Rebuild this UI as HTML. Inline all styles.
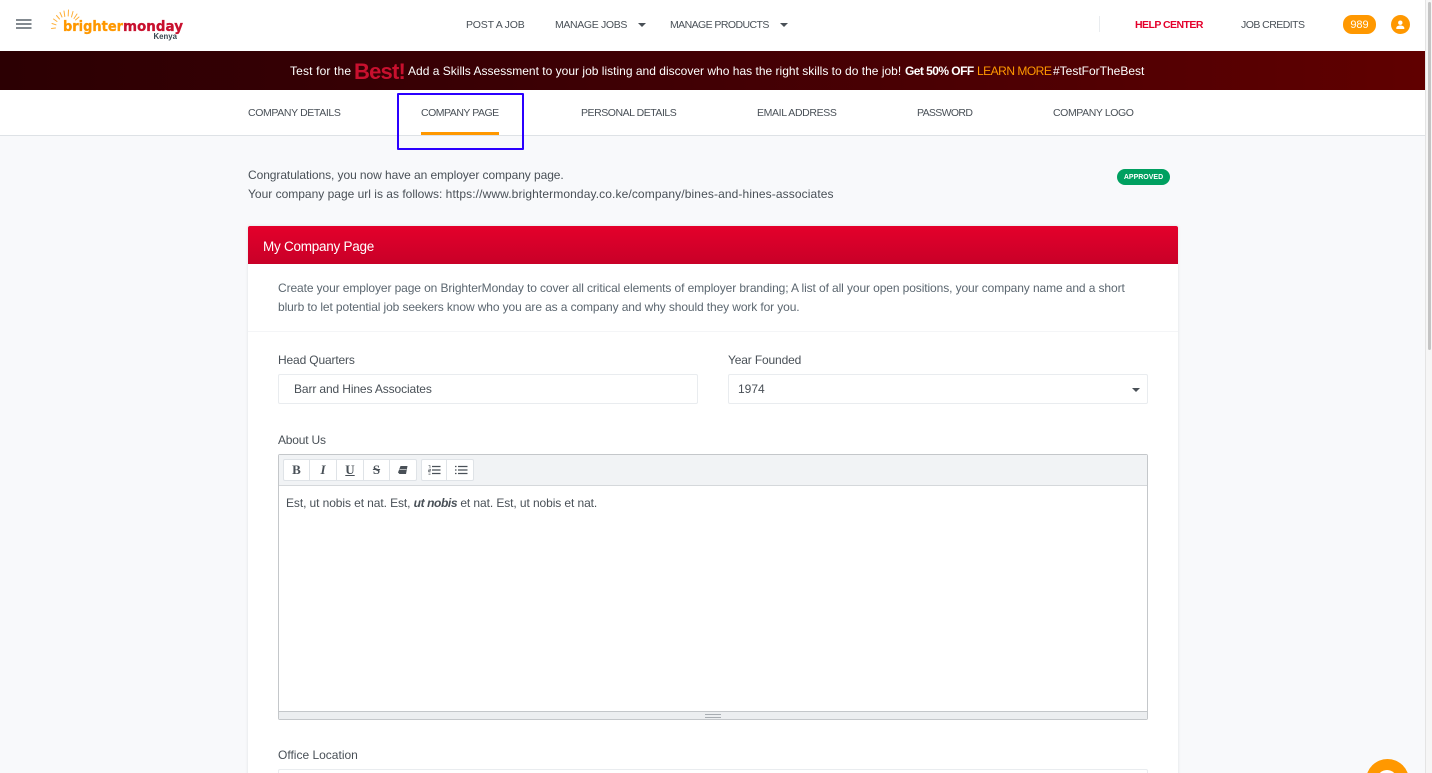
<!DOCTYPE html>
<html><head><meta charset="utf-8"><title>Company Page</title>
<style>
html,body{margin:0;padding:0;width:1432px;height:773px;overflow:hidden;background:#fff}
body{font-family:"Liberation Sans",Arial,sans-serif;color:#495057;position:relative}
.a{position:absolute;white-space:nowrap}
.t{position:absolute;white-space:nowrap;line-height:16px}
.nav{font-size:10.5px;color:#495057;top:17px}
.tab{font-size:10.5px;color:#495057;top:105px}
.body{font-size:12px;color:#495057}
.inp{position:absolute;background:#fff;border:1px solid #e9ecef;border-radius:2px;box-sizing:border-box}
.btn{position:absolute;top:459px;height:22px;background:#fff;border:1px solid #dfe3e7;box-sizing:border-box;text-align:center;font:bold 13px/20px "Liberation Serif",serif;color:#495057}
</style></head><body>
<div class="a" style="left:0;top:0;width:1425px;height:51px;background:#fff"></div>
<svg class="a" style="left:16px;top:18px" width="16" height="12"><path d="M0 2h15.500M0 6h15.500M0 10h15.500" stroke="#5a646c" stroke-width="1.500" fill="none"/></svg>
<svg class="a" style="left:48px;top:6px" width="140" height="36" viewBox="0 0 140 36">
<g stroke="#ffb03a" stroke-width="1" stroke-linecap="round"><path d="M3.500 22.500l4 -.5M4 17.500l4 1.300M5.500 13l3.500 2.500M8.500 9.500l3 3.500M12 6.500l2 4.500M16 5l.8 5.500M20.500 4l-.3 6M25 5.500l-1.500 5.500M29 8l-3 4.500M31 11l-3.500 3"/></g>
<text x="15" y="25" font-family="DejaVu Sans" font-weight="bold" font-size="14.500" fill="#ff9800" stroke="#ff9800" stroke-width=".3" textLength="60" lengthAdjust="spacingAndGlyphs">brighter</text>
<text x="75" y="25" font-family="DejaVu Sans" font-weight="bold" font-size="14.500" fill="#c8102e" stroke="#c8102e" stroke-width=".3" textLength="60" lengthAdjust="spacingAndGlyphs">monday</text>
<text x="105.500" y="33" font-family="Liberation Sans" font-weight="bold" font-size="7.800" fill="#37474f">Kenya</text>
</svg>
<div class="t nav" style="left:466px;letter-spacing:-.2px">POST A JOB</div>
<div class="t nav" style="left:555px;letter-spacing:-.35px">MANAGE JOBS</div>
<div class="a" style="left:638px;top:23px;border:4px solid transparent;border-top:4px solid #495057;border-bottom:0"></div>
<div class="t nav" style="left:670px;letter-spacing:-.57px">MANAGE PRODUCTS</div>
<div class="a" style="left:780px;top:23px;border:4px solid transparent;border-top:4px solid #495057;border-bottom:0"></div>
<div class="a" style="left:1099px;top:16px;width:1px;height:16px;background:#e9ecef"></div>
<div class="t nav" style="left:1135px;color:#e4002b;font-weight:bold;letter-spacing:-.55px">HELP CENTER</div>
<div class="t nav" style="left:1241px;letter-spacing:-.54px">JOB CREDITS</div>
<div class="a" style="left:1343px;top:15px;width:33px;height:19px;border-radius:9px;background:#ff9800;color:#fff;font-size:11px;line-height:20px;text-align:center">989</div>
<div class="a" style="left:1391px;top:15px;width:19px;height:19px;border-radius:50%;background:#ff9800"></div>
<svg class="a" style="left:1391px;top:15px" width="19" height="19"><circle cx="9.300" cy="7.700" r="2.200" fill="#fff"/><path d="M5.300 14v-1c0-2 2.500-2.500 4-2.500s4 .5 4 2.500v1z" fill="#fff"/></svg>

<div class="a" style="left:0;top:51px;width:1425px;height:39px;background:linear-gradient(90deg,#2c0003 0%,#3a0004 35%,#4d0003 70%,#600000 100%)"></div>
<div class="t" style="left:290px;top:63px;font-size:12px;color:#fff;letter-spacing:.15px">Test for the</div>
<div class="t" style="left:354px;top:61px;font-size:22px;line-height:22px;font-weight:bold;color:#c8102e;letter-spacing:-.8px">Best!</div>
<div class="t" style="left:408px;top:63px;font-size:12px;color:#fff;letter-spacing:.01px">Add a Skills Assessment to your job listing and discover who has the right skills to do the job!</div>
<div class="t" style="left:905px;top:63px;font-size:12px;color:#fff;font-weight:bold;letter-spacing:-.55px">Get 50% OFF</div>
<div class="t" style="left:977px;top:63px;font-size:12px;color:#ff9800;letter-spacing:-.5px">LEARN MORE</div>
<div class="t" style="left:1053px;top:63px;font-size:12px;color:#fff">#TestForTheBest</div>

<div class="a" style="left:0;top:90px;width:1425px;height:45px;background:#fff"></div>
<div class="a" style="left:0;top:135px;width:1425px;height:638px;background:#f8f9fb;border-top:1px solid #dee2e6"></div>
<div class="t tab" style="left:248px;letter-spacing:-.37px">COMPANY DETAILS</div>
<div class="t tab" style="left:421px;letter-spacing:-.48px">COMPANY PAGE</div>
<div class="a" style="left:421px;top:132px;width:78px;height:3px;background:#ff9800"></div>
<div class="a" style="left:397px;top:93px;width:127px;height:57px;box-sizing:border-box;border:2px solid #2b00ff;border-radius:1px"></div>
<div class="t tab" style="left:581px;letter-spacing:-.46px">PERSONAL DETAILS</div>
<div class="t tab" style="left:757px;letter-spacing:-.36px">EMAIL ADDRESS</div>
<div class="t tab" style="left:917px;letter-spacing:-.65px">PASSWORD</div>
<div class="t tab" style="left:1053px;letter-spacing:-.4px">COMPANY LOGO</div>

<div class="t body" style="left:248px;top:167px;letter-spacing:-.07px">Congratulations, you now have an employer company page.</div>
<div class="t body" style="left:248px;top:186px">Your company page url is as follows: <span style="letter-spacing:.11px">https://www.brightermonday.co.ke/company/bines-and-hines-associates</span></div>
<div class="a" style="left:1117px;top:169px;width:53px;height:16px;border-radius:8px;background:#00a060;color:#fff;font-size:7px;font-weight:bold;line-height:17px;text-align:center">APPROVED</div>

<div class="a" style="left:248px;top:226px;width:930px;height:560px;background:#fff;box-shadow:0 0 3px rgba(0,0,0,.1)"></div>
<div class="a" style="left:248px;top:226px;width:930px;height:38px;background:linear-gradient(180deg,#e4002b,#c80028);border-radius:2px 2px 0 0"></div>
<div class="t" style="left:263px;top:239px;font-size:13.500px;color:#fff;letter-spacing:-.25px">My Company Page</div>
<div class="t body" style="left:278px;top:280px;color:#5c6770;letter-spacing:-.102px">Create your employer page on BrighterMonday to cover all critical elements of employer branding; A list of all your open positions, your company name and a short</div>
<div class="t body" style="left:278px;top:299px;color:#5c6770;letter-spacing:-.11px">blurb to let potential job seekers know who you are as a company and why should they work for you.</div>
<div class="a" style="left:248px;top:331px;width:930px;height:1px;background:#f4f5f7"></div>

<div class="t body" style="left:278px;top:352px;letter-spacing:-.15px">Head Quarters</div>
<div class="t body" style="left:728px;top:352px;letter-spacing:-.15px">Year Founded</div>
<div class="inp" style="left:278px;top:374px;width:420px;height:30px"></div>
<div class="t body" style="left:294px;top:381px;letter-spacing:-.12px">Barr and Hines Associates</div>
<div class="inp" style="left:728px;top:374px;width:420px;height:30px"></div>
<div class="t body" style="left:738px;top:381px">1974</div>
<div class="a" style="left:1132px;top:388px;border:4px solid transparent;border-top:4px solid #495057;border-bottom:0"></div>

<div class="t body" style="left:278px;top:432px;letter-spacing:-.2px">About Us</div>
<div class="a" style="left:278px;top:454px;width:870px;height:266px;box-sizing:border-box;border:1px solid #c4c7ca;border-radius:2px;background:#fff"></div>
<div class="a" style="left:279px;top:455px;width:868px;height:31px;background:#f1f3f5;border-bottom:1px solid #d5d8db;box-sizing:border-box"></div>
<div class="btn" style="left:283px;width:27px;border-radius:2px 0 0 2px">B</div>
<div class="btn" style="left:310px;width:27px;font-style:italic;border-left:0">I</div>
<div class="btn" style="left:337px;width:27px;text-decoration:underline;border-left:0">U</div>
<div class="btn" style="left:364px;width:26px;text-decoration:line-through;border-left:0">S</div>
<div class="btn" style="left:390px;width:27px;border-left:0;border-radius:0 2px 2px 0"></div>
<svg class="a" style="left:397px;top:465px" width="12" height="10"><path d="M3.500 1h7l-1.500 8h-6.500l-1.500-1.500z" fill="#495057"/><path d="M2.500 4.500h7" stroke="#fff" stroke-width=".6"/></svg>
<div class="btn" style="left:421px;width:26px;border-radius:2px 0 0 2px"></div>
<div class="btn" style="left:447px;width:27px;border-left:0;border-radius:0 2px 2px 0"></div>
<svg class="a" style="left:428px;top:465px" width="13" height="10"><path d="M4 1.500h8.500M4 5h8.500M4 8.500h8.500" stroke="#495057" stroke-width="1.300"/><path d="M.5 .5h1.500v2.500M.5 4.200h2v1.200h-2v1.200h2M.5 8h2M.5 9.500h2" stroke="#495057" stroke-width=".6" fill="none"/></svg>
<svg class="a" style="left:455px;top:465px" width="13" height="10"><path d="M3 1.500h9.500M3 5h9.500M3 8.500h9.500M0 1.500h1.500M0 5h1.500M0 8.500h1.500" stroke="#495057" stroke-width="1.300"/></svg>
<div class="t body" style="left:286px;top:495px;letter-spacing:-.09px">Est, ut nobis et nat. Est, <b style="letter-spacing:-.4px"><i>ut nobis</i></b> et nat. Est, ut nobis et nat.</div>
<div class="a" style="left:279px;top:711px;width:868px;height:7px;background:#eceef0;border-top:1px solid #c4c7ca"></div>
<div class="a" style="left:705px;top:714px;width:16px;height:2px;border-top:1px solid #a8adb2;border-bottom:1px solid #a8adb2"></div>

<div class="t body" style="left:278px;top:747px">Office Location</div>
<div class="inp" style="left:278px;top:769px;width:870px;height:30px"></div>

<div class="a" style="left:1366px;top:759px;width:43px;height:43px;border-radius:50%;background:#ff9800"></div>
<div class="a" style="left:1377px;top:770px;width:20px;height:20px;border-radius:50%;background:#fff"></div>

<div class="a" style="left:1425px;top:0;width:7px;height:773px;background:#f6f6f6;border-left:1px solid #e4e4e4;box-sizing:border-box"></div>
<div class="a" style="left:1428px;top:2px;width:3px;height:348px;border-radius:2px;background:#c4c4c4"></div>
</body></html>
